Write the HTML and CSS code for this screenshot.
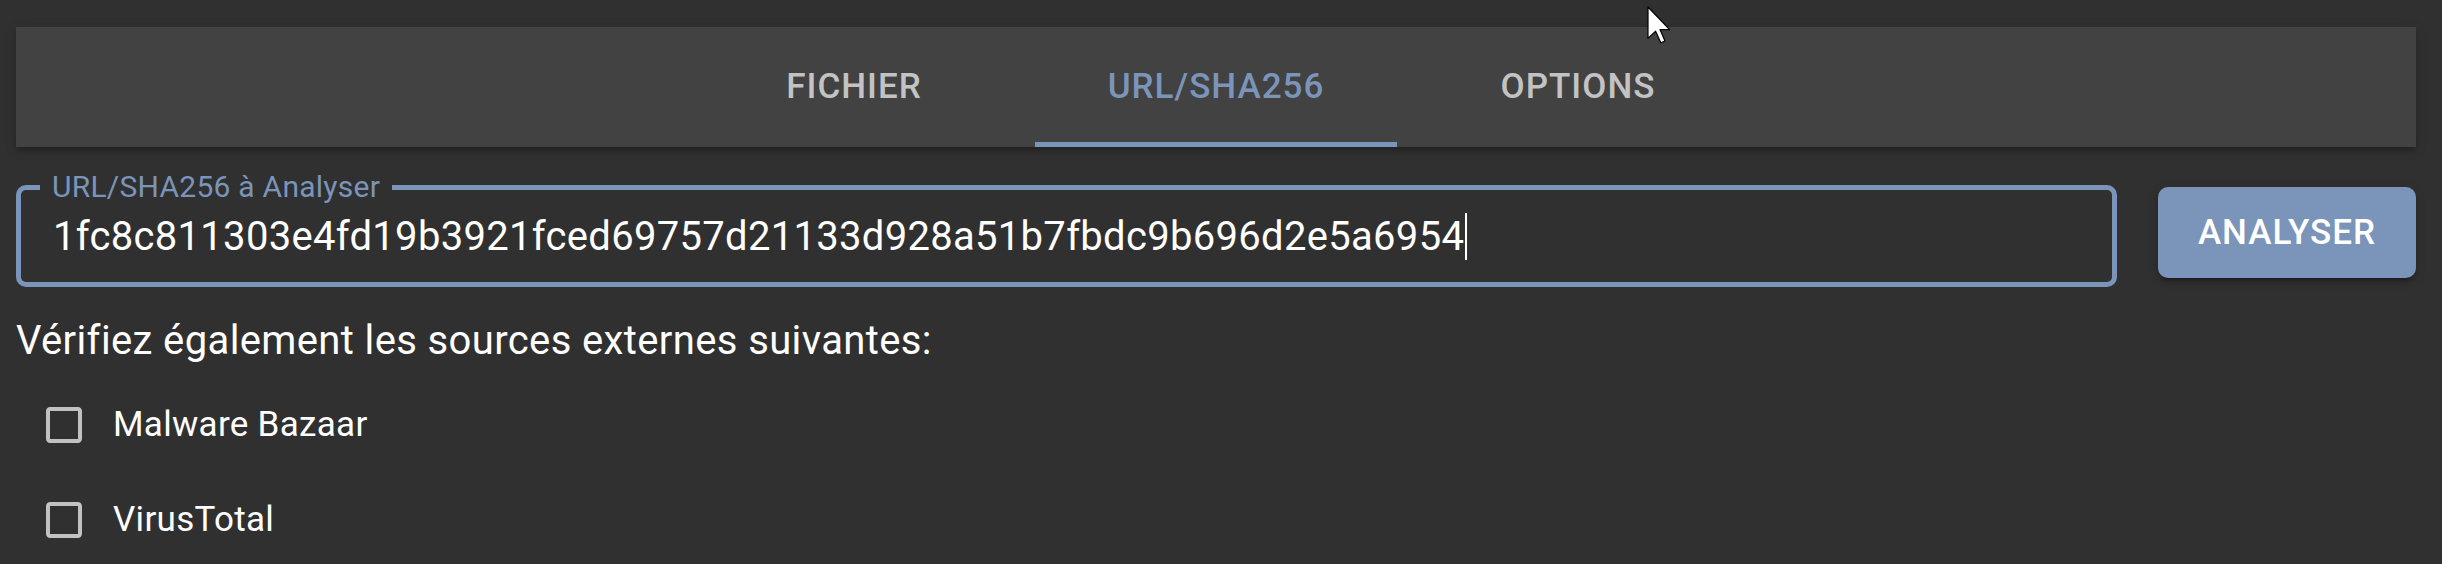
FILE: index.html
```html
<!DOCTYPE html>
<html lang="fr">
<head>
<meta charset="utf-8">
<title>Analyse URL/SHA256</title>
<link rel="stylesheet" href="styles.css">
</head>
<body>
<div class="page">
  <nav class="tabbar">
    <div class="tabs">
      <button class="tab">Fichier</button>
      <button class="tab active">URL/SHA256</button>
      <button class="tab">Options</button>
    </div>
  </nav>

  <div class="search-row">
    <div class="field">
      <span class="field-label">URL/SHA256 à Analyser</span>
      <div class="field-value">1fc8c811303e4fd19b3921fced69757d21133d928a51b7fbdc9b696d2e5a6954<span class="caret"></span></div>
    </div>
    <button class="analyse">Analyser</button>
  </div>

  <p class="hint">Vérifiez également les sources externes suivantes:</p>

  <div class="sources">
    <label class="source">
      <svg class="box" viewBox="0 0 24 24"><path d="M19 5v14H5V5h14m0-2H5c-1.11 0-2 .9-2 2v14c0 1.1.89 2 2 2h14c1.1 0 2-.9 2-2V5c0-1.1-.9-2-2-2z"/></svg>
      <span>Malware Bazaar</span>
    </label>
    <label class="source">
      <svg class="box" viewBox="0 0 24 24"><path d="M19 5v14H5V5h14m0-2H5c-1.11 0-2 .9-2 2v14c0 1.1.89 2 2 2h14c1.1 0 2-.9 2-2V5c0-1.1-.9-2-2-2z"/></svg>
      <span>VirusTotal</span>
    </label>
  </div>
</div>

<svg class="cursor" viewBox="0 0 12 19"><path d="M0.5 0.5 L0.5 16.2 L4.3 12.6 L6.9 18.4 L9 17.5 L6.5 11.8 L11.3 11.8 Z"/></svg>
</body>
</html>
```

FILE: styles.css
```css
html, body {
  margin: 0;
  padding: 0;
}

body {
  background: #303030;
  color: #ffffff;
  font-family: Roboto, "Liberation Sans", sans-serif;
  letter-spacing: 0.375px;
  overflow: hidden;
  position: relative;
}

.page {
  margin-left: 16px;
  width: 2400px;
  padding-top: 27px;
}

/* Tabs */
.tabbar {
  height: 120px;
  background: #424242;
  box-shadow: 0 5px 3px -5px rgba(0, 0, 0, 0.2), 0 5px 5px 0 rgba(0, 0, 0, 0.14), 0 2px 12px 0 rgba(0, 0, 0, 0.12);
  display: flex;
  justify-content: center;
}

.tabs {
  display: flex;
}

.tab {
  width: 362px;
  height: 120px;
  padding: 0;
  border: 0;
  background: none;
  font-family: Roboto, "Liberation Sans", sans-serif;
  font-weight: 500;
  font-size: 35px;
  line-height: 1.25;
  letter-spacing: 1px;
  text-transform: uppercase;
  color: rgba(255, 255, 255, 0.7);
}

.tab.active {
  color: #7b94b9;
  box-shadow: inset 0 -5px 0 #7b94b9;
}

/* Search row */
.search-row {
  display: flex;
  align-items: flex-start;
  gap: 41px;
  margin-top: 38px;
}

.field {
  flex: 1;
  position: relative;
  height: 102px;
  box-sizing: border-box;
  border: 5px solid #7b94b9;
  border-radius: 10px;
  padding: 18px 32px 0;
}

.field-label {
  position: absolute;
  left: 19px;
  top: -18px;
  padding: 0 12px;
  background: #303030;
  color: #7b94b9;
  font-size: 30px;
  line-height: 30px;
  letter-spacing: 0.25px;
  white-space: nowrap;
}

.field-value {
  font-size: 40px;
  line-height: 57.5px;
  letter-spacing: 0.3px;
  white-space: nowrap;
  color: #ffffff;
}

.caret {
  display: inline-block;
  width: 0;
  height: 47px;
  border-left: 2px solid #ffffff;
  margin-left: 1px;
  vertical-align: -10px;
}

.analyse {
  width: 258px;
  height: 91px;
  margin-top: 2px;
  border: 0;
  border-radius: 10px;
  background: #7b94b9;
  color: #ffffff;
  font-family: Roboto, "Liberation Sans", sans-serif;
  font-weight: 500;
  font-size: 35px;
  letter-spacing: 1px;
  text-transform: uppercase;
  box-shadow: 0 7px 2px -5px rgba(0, 0, 0, 0.2), 0 5px 5px 0 rgba(0, 0, 0, 0.14), 0 2px 12px 0 rgba(0, 0, 0, 0.12);
}

/* Hint */
.hint {
  margin: 24px 0 0;
  font-size: 40px;
  line-height: 60px;
}

/* Sources */
.sources {
  display: flex;
  flex-direction: column;
  margin-top: 6px;
}

.source {
  display: flex;
  align-items: center;
  height: 95px;
  padding-left: 24px;
  gap: 25px;
  font-size: 35px;
  letter-spacing: 0.3px;
}

.box {
  width: 48px;
  height: 48px;
  fill: rgba(255, 255, 255, 0.7);
  flex: none;
}

/* Mouse pointer overlay */
.cursor {
  position: absolute;
  left: 1647px;
  top: 6px;
  width: 24px;
  height: 38px;
  fill: #ffffff;
  stroke: #000000;
  stroke-width: 0.6;
  stroke-linejoin: round;
}
```
